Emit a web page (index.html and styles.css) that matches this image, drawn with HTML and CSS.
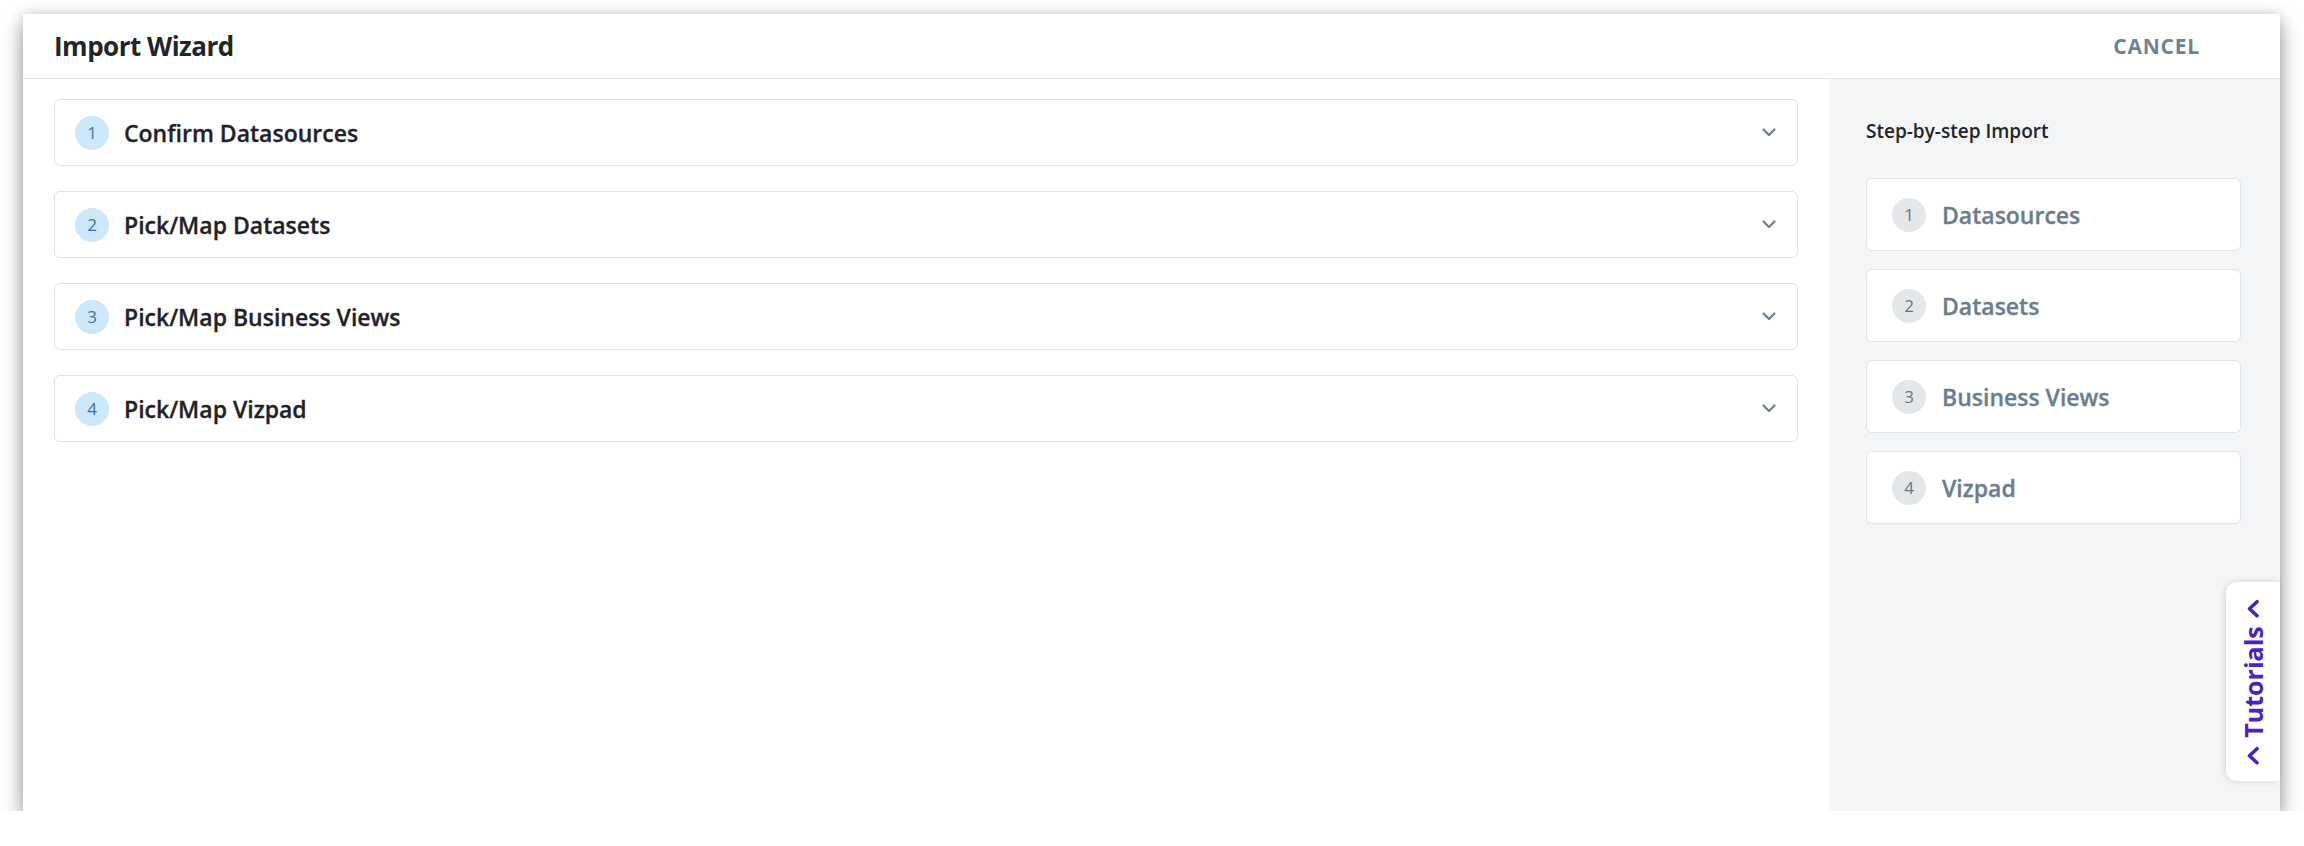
FILE: index.html
```html
<!DOCTYPE html>
<html lang="en">
<head>
<meta charset="utf-8">
<title>Import Wizard</title>
<link rel="stylesheet" href="styles.css">
</head>
<body>
<div class="modal">
  <header class="modal-header">
    <h1 class="modal-title">Import Wizard</h1>
    <button class="cancel-btn">CANCEL</button>
  </header>
  <div class="modal-body">
    <main class="main">
      <div class="acc-item">
        <span class="acc-num">1</span>
        <span class="acc-title">Confirm Datasources</span>
        <svg class="acc-chevron" width="14" height="9" viewBox="0 0 14 9"><path d="M1.5 1.5 L7 7 L12.5 1.5" fill="none" stroke="#6f7e8b" stroke-width="2.2" stroke-linecap="round" stroke-linejoin="round"/></svg>
      </div>
      <div class="acc-item">
        <span class="acc-num">2</span>
        <span class="acc-title">Pick/Map Datasets</span>
        <svg class="acc-chevron" width="14" height="9" viewBox="0 0 14 9"><path d="M1.5 1.5 L7 7 L12.5 1.5" fill="none" stroke="#6f7e8b" stroke-width="2.2" stroke-linecap="round" stroke-linejoin="round"/></svg>
      </div>
      <div class="acc-item">
        <span class="acc-num">3</span>
        <span class="acc-title">Pick/Map Business Views</span>
        <svg class="acc-chevron" width="14" height="9" viewBox="0 0 14 9"><path d="M1.5 1.5 L7 7 L12.5 1.5" fill="none" stroke="#6f7e8b" stroke-width="2.2" stroke-linecap="round" stroke-linejoin="round"/></svg>
      </div>
      <div class="acc-item">
        <span class="acc-num">4</span>
        <span class="acc-title">Pick/Map Vizpad</span>
        <svg class="acc-chevron" width="14" height="9" viewBox="0 0 14 9"><path d="M1.5 1.5 L7 7 L12.5 1.5" fill="none" stroke="#6f7e8b" stroke-width="2.2" stroke-linecap="round" stroke-linejoin="round"/></svg>
      </div>
    </main>
    <aside class="side">
      <h2 class="side-title">Step-by-step Import</h2>
      <div class="steps">
        <div class="step"><span class="step-num">1</span><span class="step-name">Datasources</span></div>
        <div class="step"><span class="step-num">2</span><span class="step-name">Datasets</span></div>
        <div class="step"><span class="step-num">3</span><span class="step-name">Business Views</span></div>
        <div class="step"><span class="step-num">4</span><span class="step-name">Vizpad</span></div>
      </div>
    </aside>
  </div>
  <div class="tutorials-tab">
    <div class="tutorials-label">
      <svg width="20" height="14" viewBox="0 0 20 14"><path d="M3 11 L10 3.5 L17 11" fill="none" stroke="#4a21c2" stroke-width="3.6" stroke-linecap="round" stroke-linejoin="round"/></svg>
      <span>Tutorials</span>
      <svg width="20" height="14" viewBox="0 0 20 14"><path d="M3 11 L10 3.5 L17 11" fill="none" stroke="#4a21c2" stroke-width="3.6" stroke-linecap="round" stroke-linejoin="round"/></svg>
    </div>
  </div>
</div>
</body>
</html>
```
FILE: styles.css
```css
* { box-sizing: border-box; }
html, body { margin: 0; padding: 0; background: #ffffff; }
body {
  font-family: "Open Sans", "Noto Sans", sans-serif;
  color: #212529;
  padding: 14px 0 0 23px;
}
.modal {
  position: relative;
  width: 2257px;
  height: 797px;
  background: #ffffff;
  display: flex;
  flex-direction: column;
  box-shadow: 0 10px 20px rgba(0,0,0,0.36), 0 0 12px rgba(0,0,0,0.14);
}
.modal-header {
  height: 65px;
  flex: none;
  display: flex;
  align-items: center;
  justify-content: space-between;
  padding: 0 80px 0 31px;
  border-bottom: 1px solid #e3e6e9;
}
.modal-title {
  margin: 0;
  font-size: 26px;
  font-weight: 700;
  color: #212529;
  letter-spacing: -0.5px;
}
.cancel-btn {
  border: none;
  background: none;
  padding: 0;
  font-family: inherit;
  font-size: 21px;
  font-weight: 700;
  letter-spacing: 0.8px;
  color: #6f8293;
}
.modal-body {
  flex: 1;
  display: flex;
  min-height: 0;
}
.main {
  flex: 1;
  padding: 20px 31px 0 31px;
  display: flex;
  flex-direction: column;
  gap: 25px;
}
.acc-item {
  height: 67px;
  border: 1px solid #dfe3e7;
  border-radius: 6px;
  display: flex;
  align-items: center;
  padding: 0 21px 0 20px;
}
.acc-num {
  width: 34px;
  height: 34px;
  border-radius: 50%;
  background: #cde7fb;
  color: #3d72b6;
  font-size: 17px;
  font-weight: 400;
  display: flex;
  align-items: center;
  justify-content: center;
  flex: none;
}
.acc-title {
  margin-left: 15px;
  font-size: 23px;
  font-weight: 600;
  color: #1f2327;
  flex: 1;
  -webkit-text-stroke: 0.3px #1f2327;
}
.acc-chevron { flex: none; }
.side {
  width: 451px;
  flex: none;
  background: #f4f5f7;
  padding: 40px 39px 0 37px;
}
.side-title {
  margin: 0;
  font-size: 19px;
  line-height: 24px;
  font-weight: 600;
  color: #212529;
}
.steps {
  margin-top: 35px;
  display: flex;
  flex-direction: column;
  gap: 18px;
}
.step {
  height: 73px;
  background: #ffffff;
  border: 1px solid #e1e4e8;
  border-radius: 6px;
  display: flex;
  align-items: center;
  padding-left: 25px;
}
.step-num {
  width: 34px;
  height: 34px;
  border-radius: 50%;
  background: #e3e7ea;
  color: #6b7883;
  font-size: 17px;
  display: flex;
  align-items: center;
  justify-content: center;
  flex: none;
}
.step-name {
  margin-left: 16px;
  font-size: 23px;
  font-weight: 600;
  color: #6a7d8e;
  -webkit-text-stroke: 0.3px #6a7d8e;
}
.tutorials-tab {
  position: absolute;
  right: 0;
  top: 568px;
  width: 54px;
  height: 199px;
  background: #ffffff;
  border-radius: 10px 0 0 10px;
  box-shadow: -1px 0 6px rgba(0,0,0,0.14);
}
.tutorials-label {
  position: absolute;
  left: 50%;
  top: 50%;
  transform: translate(-50%, -50%) rotate(-90deg);
  display: flex;
  align-items: center;
  gap: 8px;
  white-space: nowrap;
  color: #4a21c2;
  font-size: 25px;
  font-weight: 700;
}
.tutorials-label svg { display: block; }
```
